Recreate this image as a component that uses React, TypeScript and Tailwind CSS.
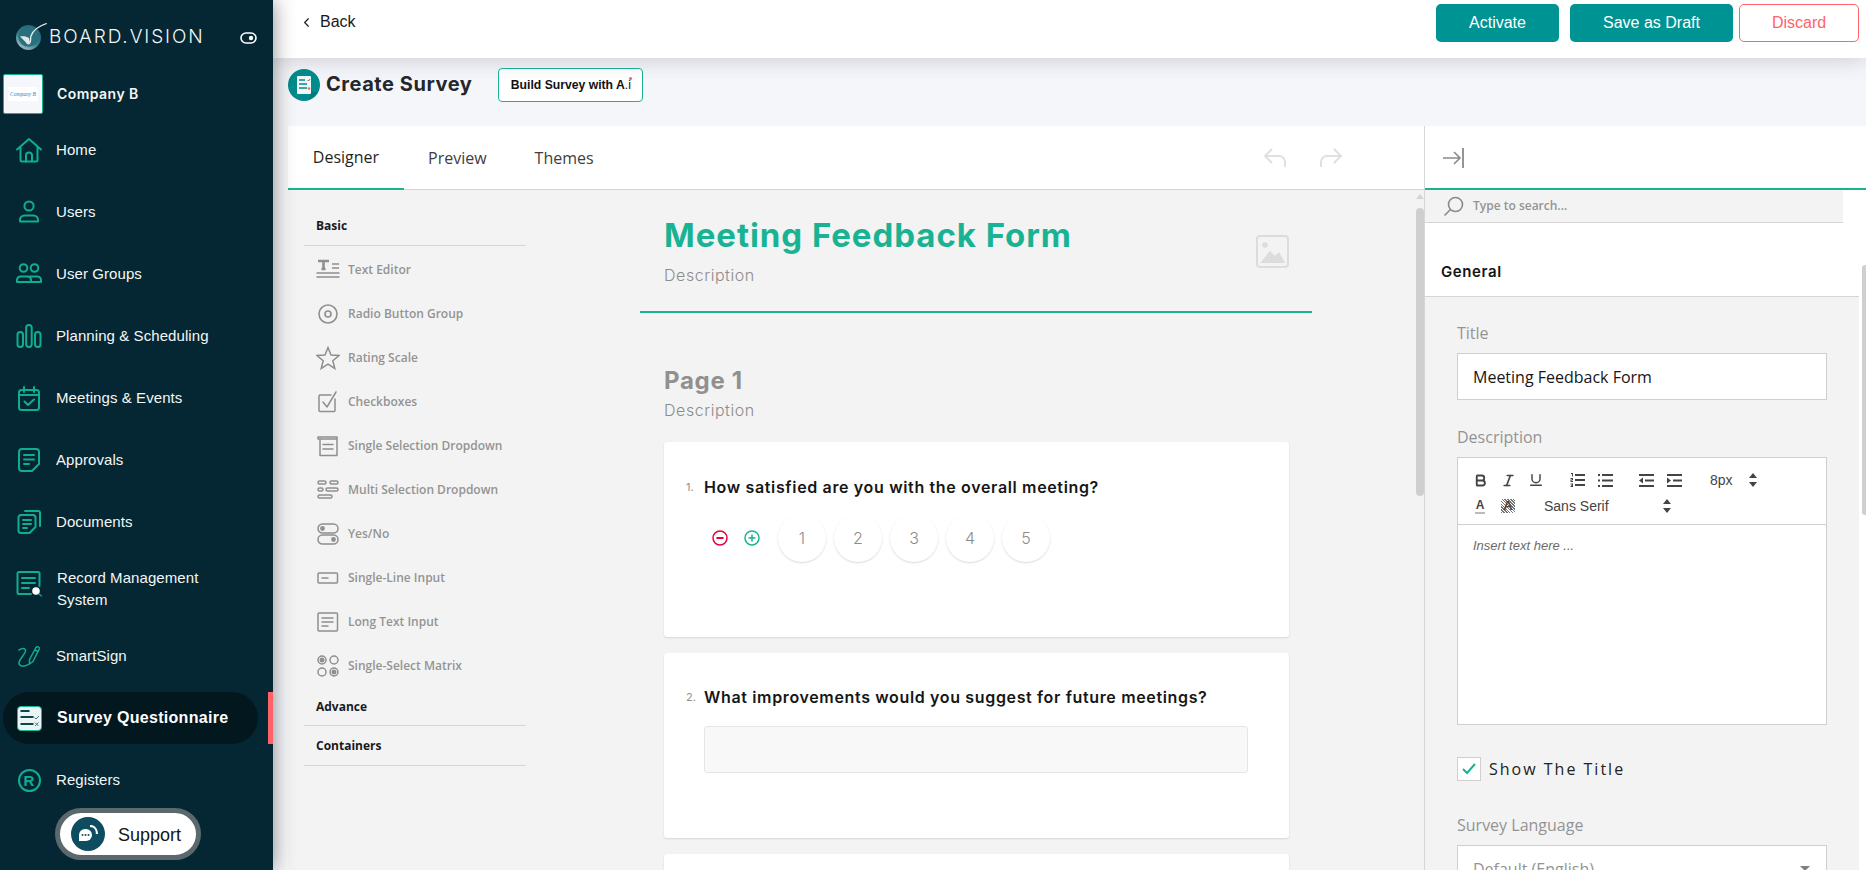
import React from 'react';
import { Bold, ChevronLeft, Italic, Underline } from 'lucide-react';

const Ico: React.FC<{ size?: number; className?: string; children: React.ReactNode; vb?: string; sw?: number }> = ({
  size = 26,
  className = 'text-[#0fae92]',
  children,
  vb = '0 0 26 26',
  sw = 2,
}) => (
  <svg width={size} height={size} viewBox={vb} fill="none" stroke="currentColor" strokeWidth={sw} strokeLinecap="round" strokeLinejoin="round" className={`shrink-0 ${className}`}>
    {children}
  </svg>
);

const navItems: { label: React.ReactNode; h: string; iconCls?: string; icon: React.ReactNode }[] = [
  { label: 'Home', h: 'h-[62px]', icon: <Ico><path d="M1 12.500 13 2l12 10.500M4.500 10v13a1.500 1.500 0 0 0 1.500 1.500h14a1.500 1.500 0 0 0 1.500-1.500V10" /><path d="M10 24.500v-6a3 3 0 0 1 6 0v6" /></Ico> },
  { label: 'Users', h: 'h-[62px]', icon: <Ico><circle cx="13" cy="7" r="4.600" /><path d="M4 22.500v-1.500a4.500 4.500 0 0 1 4.500-4.500h9a4.500 4.500 0 0 1 4.500 4.500v1.500z" /></Ico> },
  { label: 'User Groups', h: 'h-[62px]', icon: <Ico><circle cx="7.500" cy="7" r="3.800" /><circle cx="18.500" cy="7" r="3.800" /><path d="M1 21v-2a3.500 3.500 0 0 1 3.500-3.500h7A3.500 3.500 0 0 1 15 19v2zM14 15.500h7.500A3.500 3.500 0 0 1 25 19v2H15" /></Ico> },
  { label: 'Planning & Scheduling', h: 'h-[62px]', icon: <Ico><rect x="1.500" y="9" width="5.500" height="15" rx="2.700" /><rect x="10.200" y="2" width="5.500" height="22" rx="2.700" /><rect x="19" y="9" width="5.500" height="15" rx="2.700" /></Ico> },
  { label: 'Meetings & Events', h: 'h-[62px]', icon: <Ico><rect x="3" y="5" width="20" height="20" rx="2.500" /><path d="M8 2v5M18 2v5M3 10h20M8.500 16.500l3.500 3.500 6-5.500" /></Ico> },
  { label: 'Approvals', h: 'h-[62px]', icon: <Ico><path d="M6 2h14a3 3 0 0 1 3 3v12l-7 7H6a3 3 0 0 1-3-3V5a3 3 0 0 1 3-3zM8 8h10M8 12.500h10M8 17h5" /></Ico> },
  { label: 'Documents', h: 'h-[62px]', icon: <Ico><path d="M9 2h13a2 2 0 0 1 2 2v13" /><path d="M5 6h12a2.500 2.500 0 0 1 2.500 2.500V18l-6 6H5a2.500 2.500 0 0 1-2.500-2.500v-13A2.500 2.500 0 0 1 5 6zM7 11h8M7 15h8M7 19h4" /></Ico> },
  { label: <span className="block pl-px leading-[22px]">Record Management<br />System</span>, h: 'h-[72px]', iconCls: 'mt-[-11px]', icon: <Ico><path d="M15 23H3a1.500 1.500 0 0 1-1.500-1.500v-19A1.500 1.500 0 0 1 3 1h19a1.500 1.500 0 0 1 1.500 1.500V15M6 7h13M6 12h13M6 17h7" /><circle cx="20" cy="20" r="2.800" fill="#fff" stroke="#fff" /><path d="m23 23 2.500 2" strokeWidth="1.200" /></Ico> },
  { label: 'SmartSign', h: 'h-[62px]', icon: <Ico sw={1.500}><path d="m13.500 16.500 6.500-12c1-1.700 4-.3 3.200 1.500L17 18.500l-3.500 2.500zM19 7l3 1.500M3 7c4-2.500 8-1.500 6 2.500S3 17 3 20s4.500 5 10 1" /></Ico> },
];

const grey = 'text-[#8f8f8f]';
const toolIcons: Record<string, React.ReactNode> = {
  'Text Editor': <Ico size={24} className={grey} vb="0 0 24 24"><path d="M2 3h11M7.500 3v8M5.500 11h4" strokeWidth="2.600" strokeLinecap="butt" /><path d="M16 6h7M16 10h7M0.500 15h23M0.500 19h23" strokeWidth="1.300" strokeLinecap="butt" /></Ico>,
  'Radio Button Group': <Ico size={20} className={grey} vb="0 0 20 20"><circle cx="10" cy="10" r="9" strokeWidth="1.600" /><circle cx="10" cy="10" r="3" strokeWidth="1.600" /></Ico>,
  'Rating Scale': <Ico size={24} className={grey} vb="0 0 24 24"><path d="m12 1.500 3 7.500 8 .5-6.200 5.200 2 7.800L12 18.200 5.200 22.500l2-7.800L1 9.500 9 9z" strokeWidth="1.500" strokeLinejoin="miter" /></Ico>,
  Checkboxes: <Ico size={22} className={grey} vb="0 0 22 22"><path d="M18 8v11.500a1 1 0 0 1-1 1H3a1 1 0 0 1-1-1V5a1 1 0 0 1 1-1h11" strokeWidth="1.500" /><path d="m6 11 4 5L19 1" strokeWidth="1.500" /></Ico>,
  'Single Selection Dropdown': <Ico size={22} className={grey} vb="0 0 22 22"><path d="M1 2h19v2H1zM3 4v16.500h17V4M6 9.500h10M6 14h10" strokeWidth="1.500" /></Ico>,
  'Multi Selection Dropdown': <Ico size={22} className={grey} vb="0 0 22 22"><rect x="1" y="2" width="8" height="3" rx="1.500" strokeWidth="1.500" /><rect x="13" y="2" width="8" height="3" rx="1.500" strokeWidth="1.500" /><rect x="1" y="9" width="5" height="3" rx="1.500" strokeWidth="1.500" /><rect x="9" y="9" width="12" height="3" rx="1.500" strokeWidth="1.500" /><rect x="1" y="16" width="14" height="3" rx="1.500" strokeWidth="1.500" /></Ico>,
  'Yes/No': <Ico size={22} className={grey} vb="0 0 22 22"><rect x="1" y="1" width="20" height="9" rx="4.500" strokeWidth="1.500" /><rect x="1" y="12" width="20" height="9" rx="4.500" strokeWidth="1.500" /><circle cx="5.500" cy="5.500" r="1.400" fill="currentColor" /><circle cx="16.500" cy="16.500" r="1.400" fill="currentColor" /></Ico>,
  'Single-Line Input': <Ico size={22} className={grey} vb="0 0 22 22"><rect x="1" y="6" width="19.500" height="10" rx="1" strokeWidth="1.500" /><path d="M5 11h6" strokeWidth="1.500" /></Ico>,
  'Long Text Input': <Ico size={22} className={grey} vb="0 0 22 22"><rect x="1" y="2" width="19.500" height="18" rx="1" strokeWidth="1.500" /><path d="M5 7h11M5 11h11M5 15h6" strokeWidth="1.500" /></Ico>,
  'Single-Select Matrix': <Ico size={24} className={grey} vb="0 0 24 24"><circle cx="6" cy="6" r="4" strokeWidth="1.500" /><circle cx="6" cy="6" r="1.500" fill="currentColor" /><circle cx="18" cy="6" r="4" strokeWidth="1.500" /><circle cx="6" cy="18" r="4" strokeWidth="1.500" /><circle cx="18" cy="18" r="4" strokeWidth="1.500" /><circle cx="18" cy="18" r="1.500" fill="currentColor" /></Ico>,
};

const Sidebar = () => (
  <aside className="relative z-20 flex h-full w-[273px] shrink-0 flex-col bg-[#052733] text-white shadow-[0_0_20px_rgba(0,0,0,0.45)]">
    <div className="flex h-[74px] shrink-0 items-start pl-[16px] pr-4 pt-[23px]">
      <svg width="32" height="30" viewBox="0 0 32 30" className="shrink-0">
        <defs>
          <linearGradient id="logoG" x1="0.800" y1="0" x2="0.200" y2="1">
            <stop offset="0" stopColor="#1c5f6e" />
            <stop offset="0.550" stopColor="#2f7f8b" />
            <stop offset="1" stopColor="#a9c4c6" />
          </linearGradient>
        </defs>
        <circle cx="12.500" cy="14.500" r="12.500" fill="url(#logoG)" />
        <circle cx="12.500" cy="13.500" r="10.300" fill="#2a6f7c" />
        <path d="M30.700 0.500C23 3 17 7 15 13c-1 3 .5 6-1.500 7.500-2 1-3.500-1-2-3.500" fill="none" stroke="#e6efef" strokeWidth="1.300" />
        <path d="M4 13.500c3-.5 6-.5 9 1.500l1 4.500-2.500 1.500z" fill="#dfe9e9" />
      </svg>
      <span className="ml-[1px] mt-[3px] font-['Inter',sans-serif] text-[19px] font-light leading-[22px] tracking-[1.900px] text-[#f2f5f5]">BOARD.VISION</span>
      <svg width="17" height="12" viewBox="0 0 17 12" className="ml-auto mt-[9px]" fill="none">
        <rect x="1" y="1" width="15" height="10" rx="5" stroke="#fff" strokeWidth="1.600" />
        <circle cx="11" cy="6" r="2.200" fill="#fff" />
      </svg>
    </div>
    <div className="flex h-[45px] shrink-0 items-start pl-[3px]">
      <div className="flex h-[40px] w-[40px] shrink-0 items-center justify-center rounded-[2px] border border-[#14b394] bg-[#f5f7fb]">
        <div className="flex h-[14px] w-[30px] items-center justify-center bg-white font-['Liberation_Serif',serif] text-[5.500px] italic text-[#2f7fc1]">Company B</div>
      </div>
      <span className="ml-[14px] mt-[10px] font-['Inter',sans-serif] text-[14px] font-semibold leading-[20px] tracking-[0.45px] text-[#f4f6f6]">Company B</span>
    </div>
    <nav className="flex flex-col">
      {navItems.map((item, i) => (
        <div key={i} className={`flex ${item.h} items-center`}>
          <div className={`flex w-[56px] shrink-0 justify-center pl-[2px] ${item.iconCls ?? ''}`}>{item.icon}</div>
          <span className="text-[15px] tracking-[0.08px] text-[#f4f6f6]">{item.label}</span>
        </div>
      ))}
      <div className="relative mt-[5px] flex h-[52px] shrink-0 items-center">
        <div className="ml-[3px] flex h-[52px] w-[255px] items-center rounded-[26px] bg-[#03171e]">
          <svg width="25" height="25" viewBox="0 0 25 25" className="ml-[14px] shrink-0" fill="none">
            <rect x="0.500" y="0.500" width="24" height="24" rx="3.500" fill="#e9f5f2" stroke="#17b898" />
            <path d="M3.500 5h9M3.500 11h13M3.500 18h13" stroke="#11424f" strokeWidth="2" />
            <path d="m17.500 11.500 1.500 1.500 3-3M18 16.500l3.500 3.500M21.500 16.500 18 20" stroke="#4a7682" strokeWidth="1" />
          </svg>
          <span className="ml-[15px] text-[16px] font-bold tracking-[0.3px] text-white">Survey Questionnaire</span>
        </div>
        <div className="absolute right-0 top-0 h-[52px] w-[5px] bg-[#ff6368]" />
      </div>
      <div className="mt-[5px] flex h-[62px] items-center">
        <div className="flex w-[56px] shrink-0 justify-center pl-[2px]">
          <div className="flex h-[23px] w-[23px] items-center justify-center rounded-full border-2 border-[#0fae92] text-[15px] font-bold leading-none text-[#0fae92]">R</div>
        </div>
        <span className="text-[15px] tracking-[0.08px] text-[#f4f6f6]">Registers</span>
      </div>
    </nav>
    <div className="absolute left-[55px] top-[808px] flex h-[52px] w-[146px] items-center rounded-[26px] border-[5px] border-[#5b686c] bg-white">
      <div className="ml-[11px] flex h-[34px] w-[34px] shrink-0 items-center justify-center rounded-full bg-[#0e4d60]">
        <svg width="22" height="18" viewBox="0 0 22 18" fill="none">
          <path d="M2 10a6 6 0 0 1 6-6h1a6 6 0 0 1 0 12H2z" fill="#fff" />
          <circle cx="5.500" cy="10" r="1" fill="#0e4d60" /><circle cx="8.500" cy="10" r="1" fill="#0e4d60" /><circle cx="11.500" cy="10" r="1" fill="#0e4d60" />
          <path d="M13 1c4 0 7 3 7 8" stroke="#fff" strokeWidth="2.200" />
        </svg>
      </div>
      <span className="ml-[13px] mt-[1px] text-[18px] leading-[22px] text-[#151515]">Support</span>
    </div>
  </aside>
);

const TopBar = () => (
  <header className="relative z-10 flex h-[58px] shrink-0 items-start justify-between bg-white shadow-[0_2px_22px_rgba(60,65,85,0.22)]">
    <div className="ml-[26px] mt-[13px] flex items-center text-[#1a1a1a]">
      <ChevronLeft size={15} strokeWidth={1.800} />
      <span className="ml-[6px] text-[16px] leading-[18px]">Back</span>
    </div>
    <div className="mr-[7px] mt-[4px] flex">
      <button className="h-[38px] w-[123px] rounded-[5px] bg-[#009393] text-[16px] text-white">Activate</button>
      <button className="ml-[11px] h-[38px] w-[163px] rounded-[5px] bg-[#009393] text-[16px] text-white">Save as Draft</button>
      <button className="ml-[6px] h-[38px] w-[120px] rounded-[5px] border border-[#ff6368] bg-white text-[16px] text-[#ff6368]">Discard</button>
    </div>
  </header>
);

const TitleRow = () => (
  <div className="flex h-[68px] shrink-0 items-start pl-[15px] pt-[11px]">
    <svg width="32" height="32" viewBox="0 0 32 32" className="shrink-0" fill="none">
      <circle cx="16" cy="16" r="16" fill="#008c8c" />
      <path d="M23 24v-1l7 0c-3 4-5 6-9 7z" fill="#067a7a" />
      <rect x="9" y="7" width="14" height="18" rx="1" fill="#f2f8f7" />
      <path d="M11 11h6M11 15h8M11 19h8" stroke="#008c8c" strokeWidth="1.400" />
      <path d="m19.500 11 1 1 1.500-2" stroke="#555" strokeWidth="0.800" />
      <circle cx="21" cy="19.500" r="1.300" fill="#ff6368" />
    </svg>
    <h1 className="ml-[6px] mt-[1px] font-['Inter',sans-serif] text-[20px] font-bold leading-[28px] tracking-[0.55px] text-[#24272b]">Create Survey</h1>
    <button className="ml-[26px] mt-[-1px] h-[34px] w-[145px] rounded-[4px] border border-[#1ab394] bg-white text-[12.200px] font-bold text-[#111]">
      Build Survey with A<span className="font-normal">.</span><span className="relative font-normal">i<span className="absolute left-[0.500px] top-[-1px] h-[3px] w-[3px] rounded-full bg-[#ff5a5f]" /></span>
    </button>
  </div>
);

const Toolbox = () => (
  <div className="w-[352px] shrink-0 pl-[16px] font-['Open_Sans',sans-serif]">
    <div className="w-[222px]">
      <div className="flex h-[56px] items-end border-b border-[#d6d6d6] pb-[10px] pl-[12px] text-[12px] font-bold text-[#1a1a1a]">Basic</div>
      <div className="pt-[2px]">
        {Object.keys(toolIcons).map((name) => (
          <div key={name} className="flex h-[44px] items-center pl-[12px]">
            <div className="flex w-[24px] shrink-0 justify-center">{toolIcons[name]}</div>
            <span className="ml-[8px] text-[12px] font-semibold text-[#939393]">{name}</span>
          </div>
        ))}
      </div>
      <div className="flex h-[38px] items-center border-b border-[#d6d6d6] pl-[12px] text-[12px] font-bold text-[#1a1a1a]">Advance</div>
      <div className="flex h-[40px] items-center border-b border-[#d6d6d6] pl-[12px] text-[12px] font-bold text-[#1a1a1a]">Containers</div>
    </div>
  </div>
);

const Rating = () => (
  <div className="ml-[48px] mt-[15px] flex items-center">
    <svg width="16" height="16" viewBox="0 0 16 16" fill="none" stroke="#e6003e" strokeWidth="1.500" className="shrink-0">
      <circle cx="8" cy="8" r="7" /><path d="M4.500 8h7" strokeWidth="2" />
    </svg>
    <svg width="16" height="16" viewBox="0 0 16 16" fill="none" stroke="#19b394" strokeWidth="1.500" className="ml-[16px] shrink-0">
      <circle cx="8" cy="8" r="7" /><path d="M4.500 8h7M8 4.500v7" />
    </svg>
    <div className="ml-[18px] flex gap-[8px]">
      {[1, 2, 3, 4, 5].map((n) => (
        <div key={n} className="flex h-[48px] w-[48px] items-center justify-center rounded-full bg-white font-['Inter',sans-serif] text-[16px] font-light text-[#8c8c8c] shadow-[0_1px_2px_rgba(0,0,0,0.15)]">{n}</div>
      ))}
    </div>
  </div>
);

const Question: React.FC<{ n: number; text: string; pt: string }> = ({ n, text, pt }) => (
  <div className={`ml-[22px] flex items-center ${pt} font-['Inter',sans-serif]`}>
    <span className="w-[18px] text-[11px] text-[#909090]">{n}.</span>
    <span className="text-[16px] font-semibold leading-[24px] tracking-[0.65px] text-[#161616]">{text}</span>
  </div>
);

const Canvas = () => (
  <div className="min-w-0 flex-1 overflow-hidden font-['Inter',sans-serif]">
    <div className="flex h-[123px] w-[672px] items-start justify-between border-b-2 border-[#19b394] pl-[24px] pr-[23px] pt-[25px]">
      <div>
        <div className="text-[33px] font-bold leading-[40px] tracking-[0.950px] text-[#19b394]">Meeting Feedback Form</div>
        <div className="mt-[10px] text-[16px] font-light leading-[20px] tracking-[0.55px] text-[#8c8c8c]">Description</div>
      </div>
      <svg width="33" height="33" viewBox="0 0 33 33" fill="none" className="mt-[20px] shrink-0">
        <rect x="1" y="1" width="31" height="31" rx="3" stroke="#dcdcdc" strokeWidth="2" />
        <circle cx="9" cy="10" r="2.800" fill="#dcdcdc" />
        <path d="M4 28 14 16l5 5 4-4 6 11z" fill="#dcdcdc" />
      </svg>
    </div>
    <div className="ml-[24px] mt-[52px] text-[24px] font-bold leading-[32px] tracking-[0.7px] text-[#909090]">Page 1</div>
    <div className="ml-[24px] mt-[3px] text-[16px] font-light leading-[20px] tracking-[0.55px] text-[#8c8c8c]">Description</div>
    <div className="ml-[24px] mt-[22px] h-[195px] w-[625px] rounded-[3px] bg-white shadow-[0_1px_2px_rgba(0,0,0,0.12)]">
      <Question n={1} text="How satisfied are you with the overall meeting?" pt="pt-[33px]" />
      <Rating />
    </div>
    <div className="ml-[24px] mt-[16px] h-[185px] w-[625px] rounded-[3px] bg-white shadow-[0_1px_2px_rgba(0,0,0,0.12)]">
      <Question n={2} text="What improvements would you suggest for future meetings?" pt="pt-[32px]" />
      <div className="ml-[40px] mt-[17px] h-[47px] w-[544px] rounded-[3px] border border-[#e6e6e6] bg-[#f8f8f8]" />
    </div>
    <div className="ml-[24px] mt-[16px] h-[100px] w-[625px] rounded-[3px] bg-white shadow-[0_1px_2px_rgba(0,0,0,0.12)]" />
  </div>
);

const Designer = () => (
  <section className="flex min-w-0 flex-1 flex-col">
    <div className="flex h-[64px] shrink-0 items-stretch border-b border-[#d6d6d6] bg-white font-['Open_Sans',sans-serif] text-[16px]">
      <div className="mb-[-1px] flex w-[116px] items-center justify-center border-b-2 border-[#19b394] font-medium text-[#1f1f1f]">Designer</div>
      <div className="ml-[24px] flex items-center text-[#404040]">Preview</div>
      <div className="ml-[48px] flex items-center text-[#404040]">Themes</div>
      <div className="ml-auto mr-[81px] flex items-center gap-[32px] text-[#e0e0e0]">
        <svg width="24" height="22" viewBox="0 0 24 22" fill="none" stroke="currentColor" strokeWidth="2"><path d="M9 2 2 9l7 7M2 9h14a6 6 0 0 1 6 6v5" /></svg>
        <svg width="24" height="22" viewBox="0 0 24 22" fill="none" stroke="currentColor" strokeWidth="2"><path d="m15 2 7 7-7 7M22 9H8a6 6 0 0 0-6 6v5" /></svg>
      </div>
    </div>
    <div className="flex min-h-0 flex-1 bg-[#f3f3f3]">
      <Toolbox />
      <Canvas />
      <div className="w-[8px] shrink-0">
        <div className="mx-auto mt-[4px] h-0 w-0 border-x-[4px] border-b-[5px] border-x-transparent border-b-[#d4d4d4]" />
        <div className="mt-[9px] h-[288px] w-[8px] rounded-[4px] bg-[#cfcfcf]" />
      </div>
    </div>
  </section>
);

const Updown = () => (
  <svg width="8" height="14" viewBox="0 0 8 14" fill="#444"><path d="M4 0 8 5H0zM4 14 0 9h8z" /></svg>
);

// quill style toolbar glyphs, lucide's are too thin for these
const OrderedList = () => (
  <svg width="15" height="14" viewBox="0 0 15 14" fill="#444">
    <path d="M5 1h10v2H5zM5 6h10v2H5zM5 11h10v2H5z" />
    <path d="M1 0h2v3.500H2V1H1zM0.500 5h2.500v2.300H1.500v.7H3v1H0.500V6.500H2V6H0.500zM0.500 10.500H3V14H0.500v-1H2v-.3H1v-.7h1v-.5H0.500z" />
  </svg>
);
const BulletList = () => (
  <svg width="15" height="13" viewBox="0 0 15 13" fill="#444">
    <path d="M0 0h2v2H0zM0 5.500h2v2H0zM0 11h2v2H0zM4 0h11v2H4zM4 5.500h11v2H4zM4 11h11v2H4z" />
  </svg>
);
const OutdentIcon = () => (
  <svg width="15" height="13" viewBox="0 0 15 13" fill="#444">
    <path d="M0 0h15v2H0zM6 5.500h9v2H6zM0 11h15v2H0zM4 3.500v6L0 6.500z" />
  </svg>
);
const IndentIcon = () => (
  <svg width="15" height="13" viewBox="0 0 15 13" fill="#444">
    <path d="M0 0h15v2H0zM6 5.500h9v2H6zM0 11h15v2H0zM0 3.500v6l4-3z" />
  </svg>
);

const Editor = () => (
  <div className="mt-[8px] h-[268px] w-[370px] border border-[#cfcfcf] bg-white font-['Liberation_Sans',sans-serif]">
    <div className="h-[67px] border-b border-[#cfcfcf] pl-[8px] pt-[9px] text-[#444]">
      <div className="flex h-[26px] items-center">
        <div className="flex w-[28px] justify-center"><Bold size={15} strokeWidth={3} /></div>
        <div className="flex w-[28px] justify-center"><Italic size={15} strokeWidth={2.600} /></div>
        <div className="flex w-[28px] justify-center"><Underline size={16} strokeWidth={2.200} /></div>
        <div className="ml-[13px] flex w-[28px] justify-center"><OrderedList /></div>
        <div className="flex w-[28px] justify-center"><BulletList /></div>
        <div className="ml-[13px] flex w-[28px] justify-center"><OutdentIcon /></div>
        <div className="flex w-[28px] justify-center"><IndentIcon /></div>
        <span className="ml-[22px] w-[39px] text-[14px]">8px</span>
        <Updown />
      </div>
      <div className="flex h-[26px] items-center">
        <div className="flex w-[28px] justify-center"><span className="border-b-2 border-[#bbb] px-[1px] text-[12px] font-bold leading-[13px]">A</span></div>
        <div className="flex w-[28px] justify-center">
          <span className="bg-[repeating-linear-gradient(45deg,#777_0,#777_1px,#fff_1px,#fff_2px)] px-[2px] text-[13px] font-bold leading-[14px]">A</span>
        </div>
        <span className="ml-[22px] w-[119px] text-[14px]">Sans Serif</span>
        <Updown />
      </div>
    </div>
    <div className="pl-[15px] pt-[11px] text-[13px] italic leading-[20px] text-[#6b6b6b]">Insert text here ...</div>
  </div>
);

const Inspector = () => (
  <aside className="flex w-[442px] shrink-0 flex-col border-l border-[#d6d6d6] bg-white font-['Open_Sans',sans-serif]">
    <div className="flex h-[64px] shrink-0 items-center border-b-2 border-[#19b394] pl-[18px] pt-[2px]">
      <svg width="21" height="22" viewBox="0 0 21 22" fill="none" stroke="#8a8a8a" strokeWidth="1.600">
        <path d="M0 11h17M11 5l6 6-6 6" /><path d="M20 1v20" strokeWidth="1.800" />
      </svg>
    </div>
    <div className="flex min-h-0 flex-1">
      <div className="flex w-[434px] shrink-0 flex-col">
        <div className="flex h-[33px] w-[418px] shrink-0 items-center border-b border-[#d6d6d6] bg-[#f3f3f3] pl-[18px]">
          <svg width="21" height="21" viewBox="0 0 21 21" fill="none" stroke="#8a8a8a" strokeWidth="1.600">
            <circle cx="12.500" cy="8.500" r="7" /><path d="m7.500 13.500-6 6" />
          </svg>
          <span className="ml-[9px] text-[12px] font-semibold text-[#949494]">Type to search...</span>
        </div>
        <div className="flex h-[74px] shrink-0 items-end border-b border-[#d6d6d6] pb-[13px] pl-[16px] font-['Inter',sans-serif] text-[15px] font-semibold tracking-[0.6px] text-[#151515]">General</div>
        <div className="min-h-0 flex-1 overflow-hidden bg-[#f3f3f3] pl-[32px] pt-[24px]">
          <div className="text-[16px] leading-[24px] text-[#949494]">Title</div>
          <div className="mt-[8px] flex h-[47px] w-[370px] items-center border border-[#cfcfcf] bg-white pl-[15px] text-[16px] text-[#161616]">Meeting Feedback Form</div>
          <div className="mt-[25px] text-[16px] leading-[24px] text-[#949494]">Description</div>
          <Editor />
          <div className="mt-[32px] flex h-[24px] items-center">
            <div className="flex h-[24px] w-[24px] items-center justify-center border border-[#cfcfcf] bg-white">
              <svg width="14" height="12" viewBox="0 0 14 12" fill="none" stroke="#19b394" strokeWidth="2"><path d="m1 6 4 4 8-9" /></svg>
            </div>
            <span className="ml-[8px] text-[16px] tracking-[2px] text-[#222]">Show The Title</span>
          </div>
          <div className="mt-[32px] text-[16px] leading-[24px] text-[#949494]">Survey Language</div>
          <div className="mt-[8px] flex h-[47px] w-[370px] items-center justify-between border border-[#cfcfcf] bg-white pl-[15px] pr-[16px] text-[16px] text-[#949494]">
            <span>Default (English)</span>
            <span className="h-0 w-0 border-x-[5px] border-t-[5px] border-x-transparent border-t-[#808080]" />
          </div>
        </div>
      </div>
      <div className="flex-1">
        <div className="ml-auto mt-[75px] h-[250px] w-[4px] rounded-l-[3px] bg-[#cfcfcf]" />
      </div>
    </div>
  </aside>
);

export default function App() {
  return (
    <div className="flex h-[870px] w-full overflow-hidden bg-[#f5f6fa] font-['Liberation_Sans',sans-serif]">
      <Sidebar />
      <main className="flex min-w-0 flex-1 flex-col">
        <TopBar />
        <TitleRow />
        <div className="flex min-h-0 flex-1 pl-[15px]">
          <Designer />
          <Inspector />
        </div>
      </main>
    </div>
  );
}
